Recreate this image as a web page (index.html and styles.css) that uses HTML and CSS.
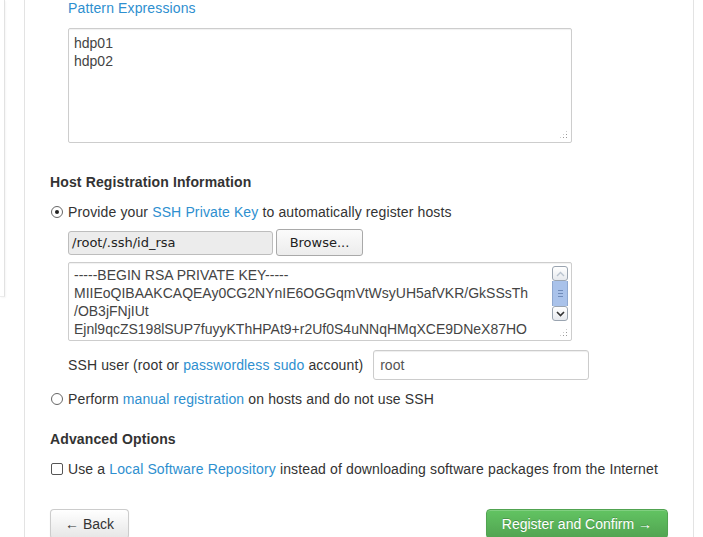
FILE: index.html
```html
<!DOCTYPE html>
<html>
<head>
<meta charset="utf-8">
<link rel="stylesheet" href="styles.css">
</head>
<body>
<div class="layout">
  <aside class="sidebar"></aside>
  <main class="panel">
    <div class="indent">
      <a class="link" href="#">Pattern Expressions</a>
      <div class="hosts-box">hdp01<br>hdp02<span class="grip"></span></div>
    </div>

    <h4 class="section-title first">Host Registration Information</h4>
    <label class="option">
      <span class="radio checked"></span>
      <span>Provide your <a class="link" href="#">SSH Private Key</a> to automatically register hosts</span>
    </label>
    <div class="indent">
      <div class="file-row">
        <span class="file-name">/root/.ssh/id_rsa</span>
        <span class="browse">Browse...</span>
      </div>
      <div class="key-box">
        <div class="key-text">-----BEGIN RSA PRIVATE KEY-----<br>MIIEoQIBAAKCAQEAy0CG2NYnIE6OGGqmVtWsyUH5afVKR/GkSSsTh<br>/OB3jFNjIUt<br>Ejnl9qcZS198lSUP7fuyyKThHPAt9+r2Uf0S4uNNqHMqXCE9DNeX87HO</div>
        <div class="scrollbar">
          <span class="sb-btn up"><svg width="9" height="6" viewBox="0 0 9 6"><path d="M1 5 L4.5 1.5 L8 5" fill="none" stroke="#b9c3cf" stroke-width="1.4"/></svg></span>
          <span class="sb-thumb"><span class="grip-lines"></span></span>
          <span class="sb-btn down"><svg width="9" height="6" viewBox="0 0 9 6"><path d="M1 1 L4.5 4.5 L8 1" fill="none" stroke="#333" stroke-width="1.6"/></svg></span>
        </div>
        <span class="grip"></span>
      </div>
      <div class="user-row">
        <span>SSH user (root or <a class="link" href="#">passwordless sudo</a> account)</span>
        <span class="text-input">root</span>
      </div>
    </div>
    <label class="option second">
      <span class="radio"></span>
      <span>Perform <a class="link" href="#">manual registration</a> on hosts and do not use SSH</span>
    </label>

    <h4 class="section-title">Advanced Options</h4>
    <label class="option">
      <span class="checkbox"></span>
      <span>Use a <a class="link" href="#">Local Software Repository</a> instead of downloading software packages from the Internet</span>
    </label>

    <div class="actions">
      <button class="btn">&larr; Back</button>
      <button class="btn btn-success">Register and Confirm &rarr;</button>
    </div>
  </main>
</div>
</body>
</html>
```
FILE: styles.css
```css
html, body {
  margin: 0;
  padding: 0;
  background: #fff;
  overflow: hidden;
}
body {
  font-family: "Liberation Sans", Arial, sans-serif;
  font-size: 14px;
  line-height: 20px;
  letter-spacing: 0.13px;
  color: #333;
}
.layout {
  display: flex;
  align-items: flex-start;
  height: 537px;
}
.sidebar {
  width: 4px;
  height: 296px;
  border-right: 1px solid #e2e2e2;
  border-bottom: 1px solid #ececec;
  box-shadow: 1px 1px 2px rgba(0,0,0,0.04);
  flex: none;
}
.panel {
  margin-left: 19px;
  margin-top: -2px;
  width: 643px;
  height: 560px;
  border-left: 1px solid #e3e3e3;
  border-right: 1px solid #e3e3e3;
  padding: 0 0 0 25px;
  flex: none;
}
.indent {
  padding-left: 18px;
}
.link {
  color: #2e8fcf;
  text-decoration: none;
}
.hosts-box {
  position: relative;
  box-sizing: border-box;
  margin-top: 10px;
  width: 504px;
  height: 115px;
  border: 1px solid #cdcdcd;
  border-radius: 2px;
  box-shadow: inset 0 1px 1px rgba(0,0,0,0.06);
  padding: 5px 5px;
  line-height: 18px;
  color: #444;
  letter-spacing: 0;
}
.grip {
  position: absolute;
  right: 3px;
  bottom: 3px;
  width: 9px;
  height: 9px;
  background:
    radial-gradient(circle, #999 0.6px, transparent 0.9px) 0 0 / 3px 3px;
  clip-path: polygon(100% 0, 100% 100%, 0 100%);
}
.section-title {
  margin: 20px 0 0;
  font-size: 14px;
  font-weight: bold;
  line-height: 20px;
  color: #333;
}
.section-title.first {
  margin-top: 29px;
}
.option {
  display: flex;
  align-items: center;
  gap: 5px;
  margin-top: 10px;
  margin-left: 1px;
}
.option.second {
  margin-top: 9px;
}
.radio {
  width: 10px;
  height: 10px;
  border: 1px solid #666;
  border-radius: 50%;
  background: #fff;
  flex: none;
  position: relative;
  box-sizing: content-box;
}
.radio.checked::after {
  content: "";
  position: absolute;
  left: 3px;
  top: 3px;
  width: 4px;
  height: 4px;
  border-radius: 50%;
  background: #222;
}
.checkbox {
  width: 10px;
  height: 10px;
  border: 1px solid #555;
  border-radius: 2px;
  background: #fff;
  flex: none;
}
.file-row {
  display: flex;
  align-items: center;
  gap: 3px;
  margin-top: 7px;
  font-family: "DejaVu Sans", sans-serif;
  font-size: 13px;
  letter-spacing: 0;
}
.file-name {
  box-sizing: border-box;
  width: 205px;
  height: 24px;
  line-height: 22px;
  padding: 0 3px;
  background: #ececec;
  border: 1px solid #bdbdbd;
  border-radius: 3px;
  color: #222;
}
.browse {
  box-sizing: border-box;
  width: 87px;
  height: 27px;
  line-height: 25px;
  text-align: center;
  border: 1px solid #a9a9a9;
  border-radius: 3px;
  background: linear-gradient(#fbfbfb, #ececec);
  color: #222;
}
.key-box {
  position: relative;
  box-sizing: border-box;
  margin-top: 6px;
  width: 504px;
  height: 79px;
  border: 1px solid #cdcdcd;
  border-radius: 2px;
  box-shadow: inset 0 1px 1px rgba(0,0,0,0.06);
  overflow: hidden;
}
.key-text {
  padding: 3px 5px;
  line-height: 18px;
  color: #444;
  white-space: nowrap;
  letter-spacing: 0;
}
.scrollbar {
  position: absolute;
  right: 3px;
  top: 3px;
  width: 16px;
  height: 55px;
  display: flex;
  flex-direction: column;
}
.sb-btn {
  box-sizing: border-box;
  height: 15px;
  border: 1px solid #9aa4b0;
  border-radius: 3px;
  background: linear-gradient(#fff, #e6e9ee);
  display: flex;
  align-items: center;
  justify-content: center;
}
.sb-thumb {
  flex: 1;
  box-sizing: border-box;
  border-left: 1px solid #8fa8cf;
  border-right: 1px solid #8fa8cf;
  background: #a9c2ea;
  display: flex;
  align-items: center;
  justify-content: center;
}
.grip-lines {
  width: 5px;
  height: 5px;
  border-top: 1px solid #6f8bb9;
  border-bottom: 1px solid #6f8bb9;
  position: relative;
}
.grip-lines::after {
  content: "";
  position: absolute;
  left: 0;
  right: 0;
  top: 2px;
  border-top: 1px solid #6f8bb9;
}
.user-row {
  display: flex;
  align-items: center;
  gap: 10px;
  margin-top: 9px;
}
.text-input {
  box-sizing: border-box;
  width: 216px;
  height: 30px;
  line-height: 28px;
  padding: 0 6px;
  border: 1px solid #ccc;
  border-radius: 3px;
  box-shadow: inset 0 1px 1px rgba(0,0,0,0.07);
  color: #555;
  letter-spacing: 0;
}
.actions {
  display: flex;
  justify-content: space-between;
  margin-top: 30px;
  width: 618px;
}
.btn {
  font-family: "Liberation Sans", Arial, sans-serif;
  font-size: 14px;
  line-height: 18px;
  letter-spacing: 0;
  padding: 5px 14px 7px;
  height: 30px;
  border: 1px solid #ccc;
  border-bottom-color: #b3b3b3;
  border-radius: 4px;
  background: linear-gradient(#ffffff, #e6e6e6);
  color: #333;
  box-shadow: inset 0 1px 0 rgba(255,255,255,0.2), 0 1px 2px rgba(0,0,0,0.05);
}
.btn-success {
  padding: 5px 15px 7px;
  color: #fff;
  border-color: #51a351;
  background: linear-gradient(#62c462, #51a351);
  text-shadow: 0 -1px 0 rgba(0,0,0,0.2);
}
```
